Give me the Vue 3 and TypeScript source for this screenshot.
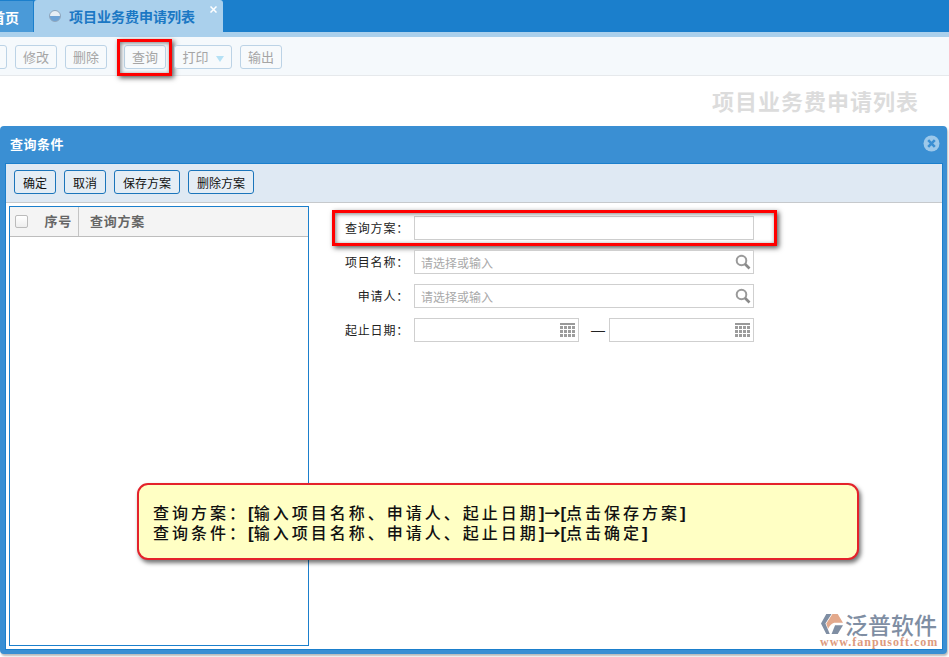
<script setup lang="ts">
const tools = [
  { label: '修改' },
  { label: '删除' },
  { label: '查询', active: true },
  { label: '打印', arrow: true },
  { label: '输出' },
]
const actions = ['确定', '取消', '保存方案', '删除方案']
const cells = Array.from({ length: 12 }, (_, i) => i)
</script>

<template>
  <div class="page">
    <header class="tabs">
      <div class="tab home">首页</div>
      <div class="tab current">
        <span class="orb"></span>
        <span>项目业务费申请列表</span>
        <svg class="tab-x" width="7" height="7" viewBox="0 0 7 7">
          <path d="M0.5 0.5 6.5 6.5M6.5 0.5 0.5 6.5" stroke="#fff" stroke-width="1.5" />
        </svg>
      </div>
    </header>
    <div class="strip"></div>
    <nav class="toolbar">
      <button class="tool stub"></button>
      <button v-for="t in tools" :key="t.label" class="tool" :class="{ active: t.active, wide: t.arrow }">
        {{ t.label }}<i v-if="t.arrow" class="arrow"></i>
        <span v-if="t.active" class="mark mark-tool"></span>
      </button>
    </nav>
    <h1 class="page-title">项目业务费申请列表</h1>

    <section class="dialog">
      <div class="dialog-head">
        <span>查询条件</span>
        <svg class="close" width="17" height="17" viewBox="0 0 17 17">
          <circle cx="8.5" cy="8.5" r="8" fill="#9cc8ea" />
          <path d="M5.2 5.2 11.8 11.8M11.8 5.2 5.2 11.8" stroke="#3a8fd3" stroke-width="2.6" />
        </svg>
      </div>
      <div class="dialog-body">
        <div class="actions">
          <button v-for="a in actions" :key="a" class="action">{{ a }}</button>
        </div>
        <div class="content">
          <aside class="plans">
            <div class="plans-head">
              <div class="col-check"><span class="check"></span></div>
              <div class="col-no">序号</div>
              <div class="col-name">查询方案</div>
            </div>
          </aside>
          <form class="form">
            <div class="row">
              <label>查询方案：</label>
              <div class="field long"></div>
              <span class="mark mark-row"></span>
            </div>
            <div class="row">
              <label>项目名称：</label>
              <div class="field long">
                <span class="hint">请选择或输入</span>
                <svg class="search" width="16" height="16" viewBox="0 0 16 16">
                  <circle cx="6.5" cy="6.5" r="4.8" fill="none" stroke="#9a9a9a" stroke-width="2" />
                  <path d="M10 10 14.5 14.5" stroke="#8a8a8a" stroke-width="2.6" />
                </svg>
              </div>
            </div>
            <div class="row">
              <label>申请人：</label>
              <div class="field long">
                <span class="hint">请选择或输入</span>
                <svg class="search" width="16" height="16" viewBox="0 0 16 16">
                  <circle cx="6.5" cy="6.5" r="4.8" fill="none" stroke="#9a9a9a" stroke-width="2" />
                  <path d="M10 10 14.5 14.5" stroke="#8a8a8a" stroke-width="2.6" />
                </svg>
              </div>
            </div>
            <div class="row">
              <label>起止日期：</label>
              <div class="field short">
                <div class="cal"><i v-for="c in cells" :key="c"></i></div>
              </div>
              <span class="dash">—</span>
              <div class="field short end">
                <div class="cal"><i v-for="c in cells" :key="c"></i></div>
              </div>
            </div>
          </form>
        </div>
      </div>
    </section>

    <div class="callout">
      <p>查询方案：<b>[</b>输入项目名称、申请人、起止日期<b>]</b><em>→</em><b>[</b>点击保存方案<b>]</b></p>
      <p>查询条件：<b>[</b>输入项目名称、申请人、起止日期<b>]</b><em>→</em><b>[</b>点击确定<b>]</b></p>
    </div>

    <div class="logo">
      <svg class="logo-mark" width="24" height="22" viewBox="0 0 25 25">
        <path d="M6 1H12L5 12 10 24H6L0 12Z" fill="#7f8ea3" />
        <path d="M13 1H19L25 11H15Q11 12 8 18L6 12Z" fill="#e3a98c" />
        <path d="M12 24 16 14H25L19 24Z" fill="#7f8ea3" />
      </svg>
      <div class="logo-cn">泛普软件</div>
      <div class="logo-url">www.fanpusoft.com</div>
    </div>
  </div>
</template>

<style scoped>
.page {
  position: relative;
  width: 949px;
  height: 657px;
  overflow: hidden;
  background: #fff;
  font-family: "Noto Sans CJK SC", "Liberation Sans", sans-serif;
  font-size: 12px;
  color: #222;
}
.tabs {
  display: flex;
  height: 32px;
  background: #1b7fcc;
  margin-left: -11px;
  align-items: flex-end;
}
.tab {
  height: 31px;
  display: flex;
  align-items: center;
  font-weight: 700;
  font-size: 14px;
}
.home {
  width: 45px;
  justify-content: flex-end;
  padding-right: 14px;
  background: #4a9ad8;
  color: #fff;
  border-right: 1px solid #1b7fcc;
  border-radius: 3px 0 0 0;
  box-sizing: border-box;
}
.current {
  position: relative;
  width: 189px;
  height: 32px;
  background: #aad0ec;
  color: #1b78c4;
  border-radius: 3px 3px 0 0;
  padding-left: 15px;
  box-sizing: border-box;
  gap: 8px;
}
.orb {
  width: 12px;
  height: 12px;
  box-sizing: border-box;
  border-radius: 50%;
  border: 1px solid #8fa6bd;
  background: linear-gradient(#e6eef5 45%, #6ea3d6 55%);
}
.tab-x {
  position: absolute;
  right: 6px;
  top: 6px;
}
.strip {
  height: 5px;
  background: #aad0ec;
}
.toolbar {
  height: 39px;
  box-sizing: border-box;
  background: #f5f9fc;
  border-bottom: 1px solid #e6e9ec;
  display: flex;
  align-items: center;
  gap: 8px;
  margin-left: -31px;
  padding-top: 2px;
}
.tool {
  position: relative;
  width: 42px;
  height: 24px;
  padding: 0 0 2px;
  background: #f7fafc;
  border: 1px solid #bcd3e6;
  border-radius: 3px;
  color: #a5a5a5;
  font: inherit;
  font-size: 13px;
}
.stub { width: 38px; }
.tool.active { margin-left: 9px; }
.tool.wide { width: 58px; }
.arrow {
  display: inline-block;
  margin-left: 7px;
  vertical-align: 0;
  border: 4px solid transparent;
  border-top: 6px solid #b5e1f5;
  border-bottom: 0;
}
.mark {
  position: absolute;
  box-sizing: border-box;
  border: 3px solid #f00;
  box-shadow: 2px 2px 5px rgba(0, 0, 0, 0.65), inset 1px 1px 4px rgba(0, 0, 0, 0.5);
  pointer-events: none;
}
.mark-tool {
  left: -8px;
  top: -7px;
  width: 55px;
  height: 37px;
}
.page-title {
  margin: 0;
  padding: 10px 30px 0 0;
  text-align: right;
  font-size: 22px;
  font-weight: 700;
  line-height: 28px;
  letter-spacing: 1px;
  color: #dcdcdc;
}
.dialog {
  position: absolute;
  left: 0;
  top: 126px;
  width: 947px;
  height: 528px;
  box-sizing: border-box;
  background: #3a8fd3;
  border-radius: 4px;
  padding: 0 4px 4px 5px;
  box-shadow: 1px 2px 2px #bbb;
  display: flex;
  flex-direction: column;
}
.dialog-head {
  height: 37px;
  flex: none;
  display: flex;
  align-items: center;
  justify-content: space-between;
  color: #fff;
  font-size: 13px;
  font-weight: 700;
  letter-spacing: 0.5px;
  padding: 0 3px 2px 5px;
  box-sizing: border-box;
}
.dialog-body {
  flex: 1;
  min-height: 0;
  display: flex;
  flex-direction: column;
  background: #fff;
  border: 1px solid #1b7fcc;
}
.actions {
  height: 39px;
  flex: none;
  box-sizing: border-box;
  background: #dfe9f3;
  border-bottom: 1px solid #c6c9cc;
  display: flex;
  align-items: center;
  gap: 8px;
  padding: 0 8px 2px;
}
.action {
  height: 24px;
  padding: 0 8px;
  background: #e4edf5;
  border: 1px solid #1b75bb;
  border-radius: 3px;
  color: #111;
  font: inherit;
  font-size: 12px;
}
.content {
  flex: 1;
  min-height: 0;
  display: flex;
  padding: 3px 0 3px 3px;
}
.plans {
  width: 300px;
  flex: none;
  box-sizing: border-box;
  border: 1px solid #1b7fcc;
}
.plans-head {
  height: 30px;
  box-sizing: border-box;
  display: flex;
  background: #f4f4f4;
  border-bottom: 1px solid #bdbdbd;
  color: #666;
  font-size: 13px;
  font-weight: 700;
  letter-spacing: 0.75px;
  align-items: stretch;
}
.col-check {
  width: 24px;
  padding-left: 5px;
  box-sizing: border-box;
  display: flex;
  align-items: center;
}
.check {
  width: 13px;
  height: 13px;
  box-sizing: border-box;
  border: 1px solid #bbb;
  border-radius: 2px;
  background: linear-gradient(#fff, #eee);
}
.col-no {
  width: 45px;
  box-sizing: border-box;
  border-right: 1px solid #c4c4c4;
  display: flex;
  align-items: center;
  justify-content: flex-end;
  padding: 0 6px 2px 0;
}
.col-name {
  display: flex;
  align-items: center;
  padding: 0 0 2px 11px;
}
.form {
  padding: 10px 0 0 22px;
  display: flex;
  flex-direction: column;
  gap: 10px;
}
.row {
  position: relative;
  display: flex;
  align-items: center;
  height: 24px;
}
.row label {
  width: 83px;
  flex: none;
  box-sizing: border-box;
  text-align: right;
  color: #222;
  font-size: 12px;
  padding: 0 5px 2px 0;
  letter-spacing: 0.8px;
}
.field {
  position: relative;
  height: 24px;
  box-sizing: border-box;
  border: 1px solid #cfcfcf;
  background: #fff;
  display: flex;
  align-items: center;
  padding-left: 6px;
}
.long { width: 340px; }
.short { width: 165px; }
.short.end { width: 145px; }
.hint {
  color: #a9a9a9;
  font-size: 12px;
}
.search {
  position: absolute;
  right: 2px;
  top: 3px;
}
.dash {
  width: 30px;
  box-sizing: border-box;
  padding-left: 8px;
  text-align: center;
  font-family: "Liberation Sans", sans-serif;
  font-size: 14px;
  color: #222;
}
.cal {
  position: absolute;
  right: 3px;
  top: 4px;
  width: 15px;
  height: 14px;
  border-top: 2px solid #999;
  box-sizing: border-box;
  display: grid;
  grid-template-columns: repeat(4, 3px);
  grid-auto-rows: 3px;
  gap: 1px;
  padding-top: 1px;
}
.cal i { background: #9c9c9c; }
.mark-row {
  left: 1px;
  top: -6px;
  width: 445px;
  height: 36px;
}
.callout {
  position: absolute;
  left: 137px;
  top: 483px;
  width: 722px;
  height: 77px;
  box-sizing: border-box;
  padding: 17px 14px 0;
  background: #ffffc4;
  border: 2px solid #e4222b;
  border-radius: 11px;
  box-shadow: 2px 3px 4px rgba(0, 0, 0, 0.55);
  color: #111;
  font-size: 16px;
  font-weight: 500;
  line-height: 20px;
  letter-spacing: 3px;
}
.callout p {
  margin: 0;
  height: 20px;
  white-space: nowrap;
}
.callout b {
  font-family: "Liberation Sans", sans-serif;
  font-size: 17px;
  font-weight: 700;
  letter-spacing: 0;
  line-height: 1;
}
.callout em {
  font-style: normal;
  font-weight: 700;
  letter-spacing: 0;
  line-height: 1;
}
.logo {
  position: absolute;
  left: 820px;
  top: 612px;
  width: 122px;
  height: 36px;
  display: grid;
  grid-template-columns: 25px auto;
  align-items: start;
}
.logo-mark {
  margin-top: 1px;
}
.logo-cn {
  font-size: 23px;
  line-height: 24px;
  color: #7f8ea3;
  font-weight: 500;
  white-space: nowrap;
}
.logo-url {
  grid-column: 1 / -1;
  margin-top: 0;
  font-family: "Liberation Serif", serif;
  font-size: 12px;
  line-height: 11px;
  font-weight: 700;
  color: #dd9a7e;
  letter-spacing: 1px;
  white-space: nowrap;
}
</style>
